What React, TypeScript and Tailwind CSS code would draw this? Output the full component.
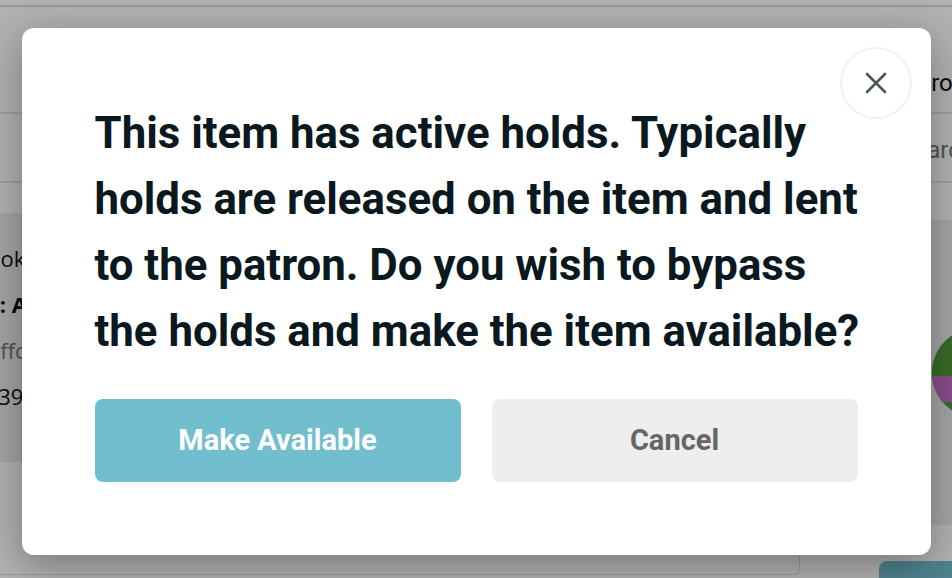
import React from "react";

export default function App() {
  return (
    <div className="relative w-[952px] h-[578px] overflow-hidden bg-white font-['Roboto',sans-serif]">
      {/* background page */}
      <div className="flex flex-col h-full font-['Open_Sans',sans-serif] text-[#111]">
        <div className="shrink-0 h-[7px] border-b-2 border-[#d8d8d8]" />
        <div className="shrink-0 h-[107px] border-b-2 border-[#e6e6e6] flex items-end justify-end pb-[11px]">
          <span className="text-[24px] -mr-[14px] font-['Roboto',sans-serif]">Patron</span>
        </div>
        <div className="shrink-0 h-[69px] border-b-2 border-[#e6e6e6] flex items-end justify-end pb-[13px]">
          <span className="text-[24px] -mr-[22px] text-[#777] font-['Roboto',sans-serif]">Search</span>
        </div>
        <div className="flex-1 min-h-0 flex justify-between">
          <div className="flex flex-col w-[820px]">
            <div className="shrink-0 mt-[30px] h-[249px] bg-[#ececec] flex flex-col pt-[26px] gap-[8px] text-[22px] leading-[38px]">
              <span className="-ml-[27px]">Book</span>
              <span className="-ml-[49px] font-bold">Title: A</span>
              <span className="-ml-[18px] text-[#777]">Jeffco</span>
              <span className="-ml-[27px]">12390</span>
            </div>
            <div className="shrink-0 mt-[91px] h-[22px] border-r border-b border-[#dcdcdc] rounded-br-[6px] w-[800px]" />
          </div>
          <div className="flex flex-col items-end w-[73px]">
            <div className="shrink-0 mt-[37px] h-[305px] w-full bg-[#ececec] flex items-center pl-[53px]">
              <svg width="90" height="90" viewBox="0 0 90 90" className="shrink-0">
                <defs>
                  <clipPath id="c">
                    <circle cx="45" cy="45" r="45" />
                  </clipPath>
                </defs>
                <g clipPath="url(#c)">
                  <rect width="90" height="90" fill="#4f9a3b" />
                  <rect x="0" y="48" width="40" height="26" fill="#c46fc8" />
                  <rect x="30" y="0" width="20" height="74" fill="#c46fc8" />
                  <rect x="0" y="0" width="30" height="48" fill="#4f9a3b" />
                </g>
              </svg>
            </div>
            <div className="shrink-0 mt-[36px] w-[73px] h-[17px] bg-[#71bece] rounded-tl-[8px]" />
          </div>
        </div>
      </div>

      {/* overlay */}
      <div className="absolute inset-0 bg-black/30 flex items-start justify-center pt-[28px]">
        <div className="relative w-[909px] bg-white rounded-[12px] shadow-[0_10px_40px_rgba(0,0,0,0.35)] px-[73px] pt-[72px] pb-[73px]">
          <button className="absolute top-[19px] right-[19px] w-[72px] h-[72px] rounded-full border-2 border-[#f1f1f1] flex items-center justify-center">
            <svg width="22" height="22" viewBox="0 0 22 22" fill="none" stroke="#4d555c" strokeWidth="2.6" strokeLinecap="round">
              <path d="M2 2 L20 20 M20 2 L2 20" />
            </svg>
          </button>
          <p className="text-[43.8px] leading-[66px] font-bold text-[#0a1820] whitespace-nowrap">
            This item has active holds. Typically
            <br />
            holds are released on the item and lent
            <br />
            to the patron. Do you wish to bypass
            <br />
            the holds and make the item available?
          </p>
          <div className="mt-[35px] grid grid-cols-2 gap-[31px]">
            <button className="h-[83px] rounded-[8px] bg-[#71bece] text-white text-[29px] font-bold">
              Make Available
            </button>
            <button className="h-[83px] rounded-[8px] bg-[#eeeeee] text-[#666666] text-[29px] font-bold">
              Cancel
            </button>
          </div>
        </div>
      </div>
    </div>
  );
}
